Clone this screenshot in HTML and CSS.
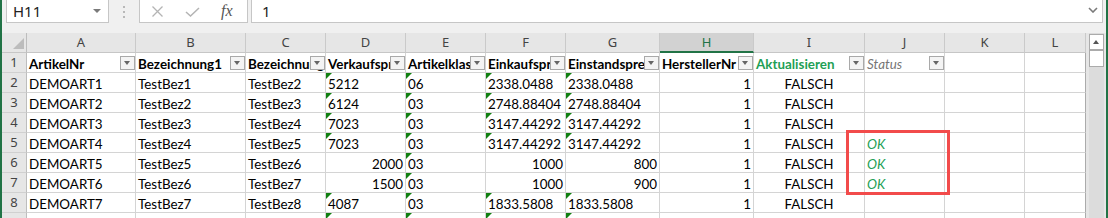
FILE: index.html
```html
<!DOCTYPE html>
<html lang="de">
<head>
<meta charset="utf-8">
<title>Tabelle</title>
<link rel="stylesheet" href="styles.css">
</head>
<body>
<div class="app">
  <div class="fbar">
    <div class="namebox"><span class="nb-text">H11</span><span class="nb-arrow"></span></div>
    <div class="grip"><i></i><i></i><i></i></div>
    <div class="fbtns">
      <svg class="ico-x" width="11" height="11" viewBox="0 0 11 11"><path d="M0.5 0.5L10.5 10.5M10.5 0.5L0.5 10.5" stroke="#b4b4b4" stroke-width="1.3" fill="none"/></svg>
      <svg class="ico-check" width="15" height="10" viewBox="0 0 15 10"><path d="M1 5L5.5 9L14 1" stroke="#b4b4b4" stroke-width="1.5" fill="none"/></svg>
      <span class="fx">fx</span>
    </div>
    <div class="finput"><span class="fval">1</span><svg class="chev" width="10" height="6" viewBox="0 0 10 6"><path d="M1 1L5 5L9 1" stroke="#7a7a7a" stroke-width="1.6" fill="none"/></svg></div>
  </div>
  <div class="body">
    <div class="sheet">
      <div class="corner"></div>
      <div class="ch">A</div><div class="ch">B</div><div class="ch">C</div><div class="ch">D</div><div class="ch">E</div><div class="ch">F</div><div class="ch">G</div><div class="ch sel">H</div><div class="ch">I</div><div class="ch">J</div><div class="ch">K</div><div class="ch">L</div>

      <div class="rh">1</div>
      <div class="hd">ArtikelNr<span class="fb"></span></div>
      <div class="hd">Bezeichnung1<span class="fb"></span></div>
      <div class="hd">Bezeichnung2<span class="fb"></span></div>
      <div class="hd">Verkaufspreis<span class="fb"></span></div>
      <div class="hd">Artikelklasse<span class="fb"></span></div>
      <div class="hd">Einkaufspreis<span class="fb"></span></div>
      <div class="hd">Einstandspreis<span class="fb"></span></div>
      <div class="hd">HerstellerNr<span class="fb"></span></div>
      <div class="hd akt">Aktualisieren<span class="fb"></span></div>
      <div class="hd status">Status<span class="fb"></span></div>
      <div></div><div></div>

      <div class="rh">2</div>
      <div>DEMOART1</div><div>TestBez1</div><div>TestBez2</div><div class="t">5212</div><div class="t">06</div><div class="t">2338.0488</div><div class="t">2338.0488</div><div class="r">1</div><div class="c">FALSCH</div><div></div><div></div><div></div>

      <div class="rh">3</div>
      <div>DEMOART2</div><div>TestBez2</div><div>TestBez3</div><div class="t">6124</div><div class="t">03</div><div class="t">2748.88404</div><div class="t">2748.88404</div><div class="r">1</div><div class="c">FALSCH</div><div></div><div></div><div></div>

      <div class="rh">4</div>
      <div>DEMOART3</div><div>TestBez3</div><div>TestBez4</div><div class="t">7023</div><div class="t">03</div><div class="t">3147.44292</div><div class="t">3147.44292</div><div class="r">1</div><div class="c">FALSCH</div><div></div><div></div><div></div>

      <div class="rh">5</div>
      <div>DEMOART4</div><div>TestBez4</div><div>TestBez5</div><div class="t">7023</div><div class="t">03</div><div class="t">3147.44292</div><div class="t">3147.44292</div><div class="r">1</div><div class="c">FALSCH</div><div class="ok">OK</div><div></div><div></div>

      <div class="rh">6</div>
      <div>DEMOART5</div><div>TestBez5</div><div>TestBez6</div><div class="r">2000</div><div class="t">03</div><div class="r">1000</div><div class="r">800</div><div class="r">1</div><div class="c">FALSCH</div><div class="ok">OK</div><div></div><div></div>

      <div class="rh">7</div>
      <div>DEMOART6</div><div>TestBez6</div><div>TestBez7</div><div class="r">1500</div><div class="t">03</div><div class="r">1000</div><div class="r">900</div><div class="r">1</div><div class="c">FALSCH</div><div class="ok">OK</div><div></div><div></div>

      <div class="rh">8</div>
      <div>DEMOART7</div><div>TestBez7</div><div>TestBez8</div><div class="t">4087</div><div class="t">03</div><div class="t">1833.5808</div><div class="t">1833.5808</div><div class="r">1</div><div class="c">FALSCH</div><div></div><div></div><div></div>

      <div class="rh">9</div>
      <div></div><div></div><div></div><div class="t"></div><div class="t"></div><div class="t"></div><div class="t"></div><div></div><div></div><div></div><div></div><div></div>
    </div>
    <div class="vscroll">
      <div class="sb">
        <div class="sb-up"></div>
        <div class="sb-thumb"></div>
      </div>
    </div>
  </div>
  <div class="mark"></div>
</div>
</body>
</html>
```
FILE: styles.css
```css
* { box-sizing: border-box; margin: 0; padding: 0; }
html, body { width: 1108px; height: 218px; overflow: hidden; background: #ffffff; }
body { font-family: Lato, "Liberation Sans", sans-serif; }

.app {
  position: relative;
  width: 1108px;
  height: 218px;
  border-left: 2px solid #217346;
  border-right: 2px solid #217346;
  background: #f0f0f0;
  display: flex;
  flex-direction: column;
  overflow: hidden;
}

/* formula bar */
.fbar {
  height: 33px;
  flex: none;
  display: flex;
  align-items: flex-start;
  padding-left: 4px;
}
.namebox {
  margin-top: -1px;
  width: 103px;
  height: 24px;
  background: #fff;
  border: 1px solid #c6c6c6;
  display: flex;
  align-items: center;
  justify-content: space-between;
  padding: 0 7px 0 6px;
}
.nb-text {
  font-family: "Noto Sans", "Open Sans", sans-serif;
  font-size: 15px;
  color: #222;
  line-height: 20px;
}
.nb-arrow {
  width: 0; height: 0;
  border-left: 4px solid transparent;
  border-right: 4px solid transparent;
  border-top: 4px solid #7a7a7a;
}
.grip {
  width: 30px;
  height: 22px;
  display: flex;
  flex-direction: column;
  align-items: center;
  gap: 3px;
  padding-top: 6px;
}
.grip i {
  display: block;
  width: 2px;
  height: 2px;
  background: #b8b8b8;
}
.fbtns {
  margin-top: -1px;
  width: 109px;
  height: 24px;
  background: #fff;
  border: 1px solid #c6c6c6;
  display: flex;
  align-items: flex-start;
  padding-left: 12px;
}
.ico-x { margin-top: 6px; }
.ico-check { margin-top: 7px; margin-left: 22px; }
.fx {
  margin-left: 21px;
  font-family: "Liberation Serif", serif;
  font-style: italic;
  font-size: 16px;
  line-height: 20px;
  color: #555;
  margin-top: 1px;
}
.finput {
  margin-top: -1px;
  margin-left: 3px;
  margin-right: 3px;
  flex: 1;
  height: 24px;
  background: #fff;
  border: 1px solid #c6c6c6;
  display: flex;
  align-items: center;
  justify-content: space-between;
  padding: 0 4px 0 10px;
}
.fval {
  font-family: "Noto Sans", "Open Sans", sans-serif;
  font-size: 15px;
  color: #222;
  line-height: 20px;
}
.chev { margin-top: -2px; }

/* sheet */
.body {
  flex: 1;
  display: flex;
  min-height: 0;
}
.sheet {
  flex: none;
  width: 1084px;
  display: grid;
  grid-template-columns: 25px 109px 110px 80px 80px 80px 80px 94px 94px 111px 80px 80px 61px;
  grid-auto-rows: 20px;
  background: #fff;
}
.sheet > div {
  position: relative;
  border-right: 1px solid #d4d4d4;
  border-bottom: 1px solid #d4d4d4;
  padding: 3px 2px 0 2px;
  font-size: 13.4px;
  line-height: 16px;
  white-space: nowrap;
  overflow: hidden;
  color: #000;
}
.sheet > div:nth-child(13n) { border-right-color: #ababab; }

.sheet > .corner {
  background: #e6e6e6;
  border-right-color: #bdbdbd;
  border-bottom-color: #c6c6c6;
  display: flex;
  justify-content: flex-end;
  align-items: flex-end;
  padding: 0 2px 3px 0;
}
.corner::after {
  content: "";
  width: 0; height: 0;
  border-left: 11px solid transparent;
  border-bottom: 11px solid #bcbcbc;
}
.sheet > .ch {
  background: #e6e6e6;
  border-right-color: #cacaca;
  border-bottom-color: #c6c6c6;
  padding: 0;
  text-align: center;
  font-family: "Noto Sans", "Open Sans", sans-serif;
  font-size: 13px;
  line-height: 19px;
  color: #444;
}
.sheet > .ch:nth-child(13n) { border-right-color: #cacaca; }
.sheet > .ch.sel {
  background: #d2d2d2;
  color: #217346;
  border-bottom: 2px solid #217346;
  line-height: 18px;
}
.sheet > .rh {
  background: #e6e6e6;
  border-right-color: #bdbdbd;
  border-bottom-color: #d0d0d0;
  padding: 0;
  text-align: center;
  font-family: "Noto Sans", "Open Sans", sans-serif;
  font-size: 13px;
  line-height: 19px;
  color: #444;
}

.sheet > .hd { font-weight: 700; }
.sheet > .akt { color: #1e9f55; }
.sheet > .status { font-weight: 400; font-style: italic; color: #767676; }
.fb {
  position: absolute;
  right: 0;
  top: 3px;
  width: 15px;
  height: 14px;
  background: #f4f4f4;
  border: 1px solid #a9a9a9;
}
.fb::after {
  content: "";
  position: absolute;
  left: 3px;
  top: 4px;
  width: 0; height: 0;
  border-left: 3.5px solid transparent;
  border-right: 3.5px solid transparent;
  border-top: 4px solid #666;
}

.sheet > .r { text-align: right; }
.sheet > .c { text-align: center; }
.sheet > .ok { font-style: italic; color: #1e9f55; }
.sheet > .t::before {
  content: "";
  position: absolute;
  left: 0;
  top: 0;
  width: 0; height: 0;
  border-top: 6px solid #118011;
  border-right: 6px solid transparent;
}

/* scrollbar */
.vscroll {
  width: 20px;
  flex: none;
  background: #e6e6e6;
  padding-left: 3px;
  padding-right: 2px;
}
.sb {
  height: 100%;
  background: #dcdcdc;
  padding-top: 1px;
}
.sb-up {
  position: relative;
  height: 16px;
  background: #fff;
  border: 1px solid #ababab;
}
.sb-up::after {
  content: "";
  position: absolute;
  left: 3px;
  top: 5px;
  width: 0; height: 0;
  border-left: 3.5px solid transparent;
  border-right: 3.5px solid transparent;
  border-bottom: 4px solid #555;
}
.sb-thumb {
  height: 17px;
  background: #fff;
  border: 1px solid #ababab;
}

/* annotation */
.mark {
  position: absolute;
  left: 844px;
  top: 130px;
  width: 104px;
  height: 65px;
  border: 3px solid #f24b4b;
}
```
